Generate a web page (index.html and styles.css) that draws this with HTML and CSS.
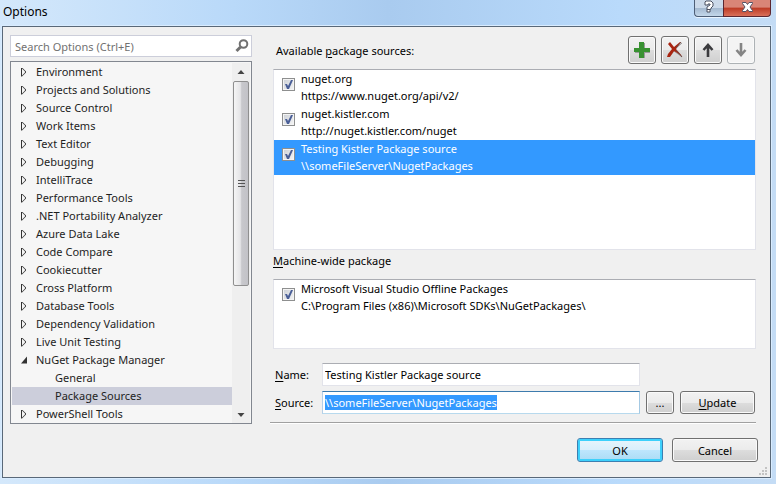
FILE: index.html
```html
<!DOCTYPE html>
<html lang="en">
<head>
<meta charset="utf-8">
<title>Options</title>
<link rel="stylesheet" href="styles.css">
</head>
<body>
<header class="titlebar">
  <h1 class="title">Options</h1>
  <div class="caption">
    <button class="cap-btn help" type="button" aria-label="Help"><svg width="10" height="13" viewBox="0 0 10 13"><path d="M1 2l1-1h5l2 2v3L7 8v1l-1 .500v2.500H3V7l3-2V4H4v1H1z" fill="#fff" stroke="#4a5060"/><path d="M3 9.500h3" stroke="#4a5060"/></svg></button>
    <button class="cap-btn close" type="button" aria-label="Close"><svg width="13" height="12" viewBox="0 0 13 12"><path d="M1.500 1.500h3.500l1.500 2L8 1.500h3.500v1L9 6l2.500 3.500v1H8l-1.500-2-1.500 2H1.500v-1L4 6 1.500 2.500z" fill="#fff" stroke="#555265"/></svg></button>
  </div>
</header>
<form class="dialog">
  <div class="panes">
    <section class="nav">
      <div class="search">
        <input type="text" aria-label="Search Options" placeholder="Search Options (Ctrl+E)">
        <svg width="14" height="14" viewBox="0 0 14 14"><circle cx="8.500" cy="5" r="3.800" fill="none" stroke="#717171" stroke-width="2"/><path d="M5.500 8L1.500 12" stroke="#717171" stroke-width="3"/></svg>
      </div>
      <div class="treebox">
        <ul class="tree">
          <li>Environment</li>
          <li>Projects and Solutions</li>
          <li>Source Control</li>
          <li>Work Items</li>
          <li>Text Editor</li>
          <li>Debugging</li>
          <li>IntelliTrace</li>
          <li>Performance Tools</li>
          <li>.NET Portability Analyzer</li>
          <li>Azure Data Lake</li>
          <li>Code Compare</li>
          <li>Cookiecutter</li>
          <li>Cross Platform</li>
          <li>Database Tools</li>
          <li>Dependency Validation</li>
          <li>Live Unit Testing</li>
          <li class="open">NuGet Package Manager</li>
          <li class="child">General</li>
          <li class="child selected">Package Sources</li>
          <li>PowerShell Tools</li>
        </ul>
        <div class="scrollbar" aria-hidden="true">
          <svg width="16" height="18" viewBox="0 0 16 18"><path d="M4.500 11L8 7l3.500 4z" fill="#444"/></svg>
          <div class="thumb"><svg width="7" height="8" viewBox="0 0 7 8"><path d="M0 .5h7M0 3.500h7M0 6.500h7" stroke="#555"/></svg></div>
          <svg width="16" height="18" viewBox="0 0 16 18"><path d="M4.500 8h7L8 12z" fill="#444"/></svg>
        </div>
      </div>
    </section>
    <section class="page">
      <div class="toolbar">
        <h2>Available <u>p</u>ackage sources:</h2>
        <button class="btn tool" type="button" aria-label="Add"><svg width="18" height="18" viewBox="0 0 18 18"><path d="M7 2h5v5h5v5h-5v5H7v-5H2V7h5z" fill="#9a9a9a"/><path d="M6 1h5v6h6v4h-6v6H6v-6H1V7h5z" fill="#389131"/></svg></button>
        <button class="btn tool" type="button" aria-label="Remove"><svg width="18" height="18" viewBox="0 0 18 18"><path d="M16 2L9 8l7 8-8-6-5 6" fill="none" stroke="#999"/><path d="M1 16l1-3L6 8 2 3l2-2 4 5 6-5h1L10 8l6 7-8-5-4 6z" fill="#a92410"/><path d="M10 7l5-6M10 9l6 7" stroke="#704b46"/></svg></button>
        <button class="btn tool" type="button" aria-label="Move up"><svg width="18" height="18" viewBox="0 0 18 18"><path d="M9 16V4M4.500 9L9 4l4.500 5" fill="none" stroke="#3b3b3e" stroke-width="2.600"/></svg></button>
        <button class="btn tool" type="button" aria-label="Move down" disabled><svg width="18" height="18" viewBox="0 0 18 18"><path d="M9 2v12M4.500 9L9 14l4.500-5" fill="none" stroke="#858585" stroke-width="2.600"/></svg></button>
      </div>
      <div class="list sources">
        <label class="source"><input type="checkbox" checked><span>nuget.org<br>https://www.nuget.org/api/v2/</span></label>
        <label class="source"><input type="checkbox" checked><span>nuget.kistler.com<br>http://nuget.kistler.com/nuget</span></label>
        <label class="source active"><input type="checkbox" checked><span>Testing Kistler Package source<br>\\someFileServer\NugetPackages</span></label>
      </div>
      <h2 class="machine"><u>M</u>achine-wide package</h2>
      <div class="list offline">
        <label class="source"><input type="checkbox" checked><span>Microsoft Visual Studio Offline Packages<br>C:\Program Files (x86)\Microsoft SDKs\NuGetPackages\</span></label>
      </div>
      <div class="fields">
        <label for="name"><u>N</u>ame:</label>
        <input class="field" id="name" type="text" value="Testing Kistler Package source">
        <label class="row2" for="source"><u>S</u>ource:</label>
        <input class="field row2" id="source" type="text" value="\\someFileServer\NugetPackages">
        <button class="btn row2" type="button" aria-label="Browse">...</button>
        <button class="btn row2" type="button"><span><u>U</u>pdate</span></button>
      </div>
    </section>
  </div>
  <footer class="actions">
    <button class="btn wide default" type="button">OK</button>
    <button class="btn wide" type="button">Cancel</button>
    <svg class="grip" width="9" height="9" viewBox="0 0 9 9" aria-hidden="true"><path d="M6 0h2v2H6zM3 3h2v2H3zM6 3h2v2H6zM0 6h2v2H0zM3 6h2v2H3zM6 6h2v2H6z" fill="#c3c3c3"/></svg>
  </footer>
</form>
<script src="script.js"></script>
</body>
</html>
```
FILE: styles.css
```css
* { box-sizing: border-box; }

body {
  margin: 0;
  min-height: 100vh;
  display: flex;
  flex-direction: column;
  padding: 0 5px 6px 2px;
  background: linear-gradient(90deg, #d4e8fb 0, #b9d9f9 30%, #a9cbef 50%, #b9dafb 80%, #c4dcf5 100%);
  font: 11px/17px "Noto Sans", "Open Sans", sans-serif;
  color: #000;
}

button, input { font: inherit; color: inherit; }
h1, h2 { margin: 0; font: inherit; }
u { text-underline-offset: 2px; }
svg { display: block; flex: none; }

.titlebar {
  display: flex;
  justify-content: space-between;
  align-items: flex-start;
  height: 26px;
}
.title { padding: 3px 1px; font-size: 12px; }
.caption { display: flex; }
.cap-btn {
  display: flex;
  align-items: center;
  justify-content: center;
  height: 17px;
  padding: 0 0 3px;
  border: 1px solid #4d5e76;
  border-top: 0;
  box-shadow: 0 1px 0 #e9f4ff;
}
.help {
  width: 29px;
  border-right: 0;
  border-radius: 0 0 0 4px;
  background: linear-gradient(#cbd9e9 50%, #a3b8cf 50%, #c3d7ea);
}
.close {
  width: 48px;
  border-color: #5b2630;
  border-radius: 0 0 4px 0;
  background: linear-gradient(#d98577 45%, #bd3a24 50%, #d9705a);
}

.dialog {
  flex: 1;
  display: flex;
  flex-direction: column;
  border: 1px solid #596878;
  background: #f0f0f0;
  box-shadow: 0 0 0 1px #d9ecff;
}
.panes {
  flex: 1;
  display: grid;
  grid-template-columns: 242px 1fr;
  gap: 21px;
  padding: 8px 14px 0 7px;
}

.nav { display: flex; flex-direction: column; gap: 4px; }
.search {
  display: flex;
  align-items: center;
  height: 22px;
  padding: 0 2px 0 4px;
  border: 1px solid #ccceda;
  background: #fff;
}
.search input {
  flex: 1;
  min-width: 0;
  padding: 0;
  border: 0;
  outline: 0;
  background: none;
}
.search input::placeholder { color: #717171; opacity: 1; }

.treebox {
  display: flex;
  flex: 1;
  padding: 1px 1px 0;
  border: 1px solid #828790;
  background: #f6f6f6;
}
.tree {
  flex: 1;
  margin: 0;
  padding: 0;
  list-style: none;
  line-height: 18px;
  color: #1e1e1e;
}
.tree li { display: flex; align-items: center; height: 18px; }
.tree li::before {
  content: "";
  width: 6px;
  height: 9px;
  margin: 0 9px 0 9px;
  background: #333;
  clip-path: polygon(evenodd, 0 0, 1px 0, 5px 4px, 5px 5px, 1px 9px, 0 9px, 0 0, 1px 1px, 1px 8px, 4px 5px, 4px 4px, 1px 1px);
}
.tree li.open::before { clip-path: polygon(6px 1px, 6px 8px, 0 8px); }
.tree li.child { padding-left: 43px; }
.tree li.child::before { content: none; }
.tree li.selected { background: #cccedb; }

.scrollbar {
  display: flex;
  flex-direction: column;
  width: 18px;
  padding: 0 1px;
  background: #efefef;
}
.thumb {
  display: flex;
  align-items: center;
  justify-content: center;
  height: 205px;
  margin-bottom: auto;
  border: 1px solid #8f8f8f;
  border-radius: 2px;
  background: linear-gradient(90deg, #f5f5f5, #e5e5e7 45%, #c8c8cc 55%, #c2c2c7);
}

.page { display: flex; flex-direction: column; min-width: 0; }
.toolbar { display: flex; gap: 5px; padding: 1px 1px 0 0; }
.toolbar h2 { flex: 1; padding: 6px 3px 5px; }
.btn {
  display: flex;
  align-items: center;
  justify-content: center;
  height: 23px;
  padding: 0;
  border: 1px solid #707070;
  border-radius: 3px;
  background: linear-gradient(#f2f2f2, #ebebeb 50%, #dddddd 50%, #cfcfcf);
  box-shadow: inset 0 0 0 1px #fafafa;
}
.tool { width: 28px; height: 28px; }
.btn:disabled { border-color: #adb2b5; background: #f4f4f4; }

.list {
  border: 1px solid #e2e3ea;
  border-top-color: #abadb3;
  background: #fff;
}
.sources { flex: 1; margin-top: 5px; }
.machine { padding: 2px 0 10px; }
.offline { height: 70px; }
.source {
  display: flex;
  gap: 6px;
  height: 35px;
  padding: 0 8px;
}
.source.active { background: #39f; color: #fff; }
.source input {
  appearance: none;
  width: 13px;
  height: 13px;
  margin: 8px 0 0;
  border: 1px solid #8e8f8f;
  background: linear-gradient(135deg, #cbcfd5, #f6f6f6);
  box-shadow: inset 0 0 0 1px #f4f4f4;
}
.source input:checked::after {
  content: "";
  display: block;
  width: 11px;
  height: 11px;
  background: #4a5f97;
  clip-path: polygon(2px 5px, 4px 5px, 5px 7px, 8px 1px, 10px 1px, 6px 10px, 4px 10px);
}

.fields {
  display: grid;
  grid-template-columns: 41px 1fr 28px 75px;
  align-items: center;
  gap: 5px 6px;
  margin: 14px 0 1px -3px;
  padding: 0 1px 8px 5px;
  border-bottom: 1px solid #a0a0a0;
  box-shadow: 0 1px 0 #fff;
}
.field {
  min-width: 0;
  height: 23px;
  padding: 0 2px;
  border: 1px solid #e2e3ea;
  border-top-color: #abadb3;
  outline: 0;
  background: #fff;
}
.field:focus { border-color: #3d7bad #a4c9e3 #b7d9ed #b5cfe7; }
.field::selection { background: #39f; color: #fff; }
.row2 { grid-row: 2; }

.actions {
  position: relative;
  display: flex;
  justify-content: flex-end;
  gap: 9px;
  padding: 14px 12px 15px 0;
}
.wide { width: 86px; height: 24px; }
.default {
  border-color: #3c7fb1;
  background: linear-gradient(#e8f5fc, #d9effb 50%, #bee6fd 50%, #a9dbf5);
  box-shadow: inset 0 0 0 2px #3dd0fb;
}
.grip { position: absolute; right: 2px; bottom: 1px; }
```
FILE: script.js
```js
const source = document.getElementById("source");
source.focus();
source.select();
```
